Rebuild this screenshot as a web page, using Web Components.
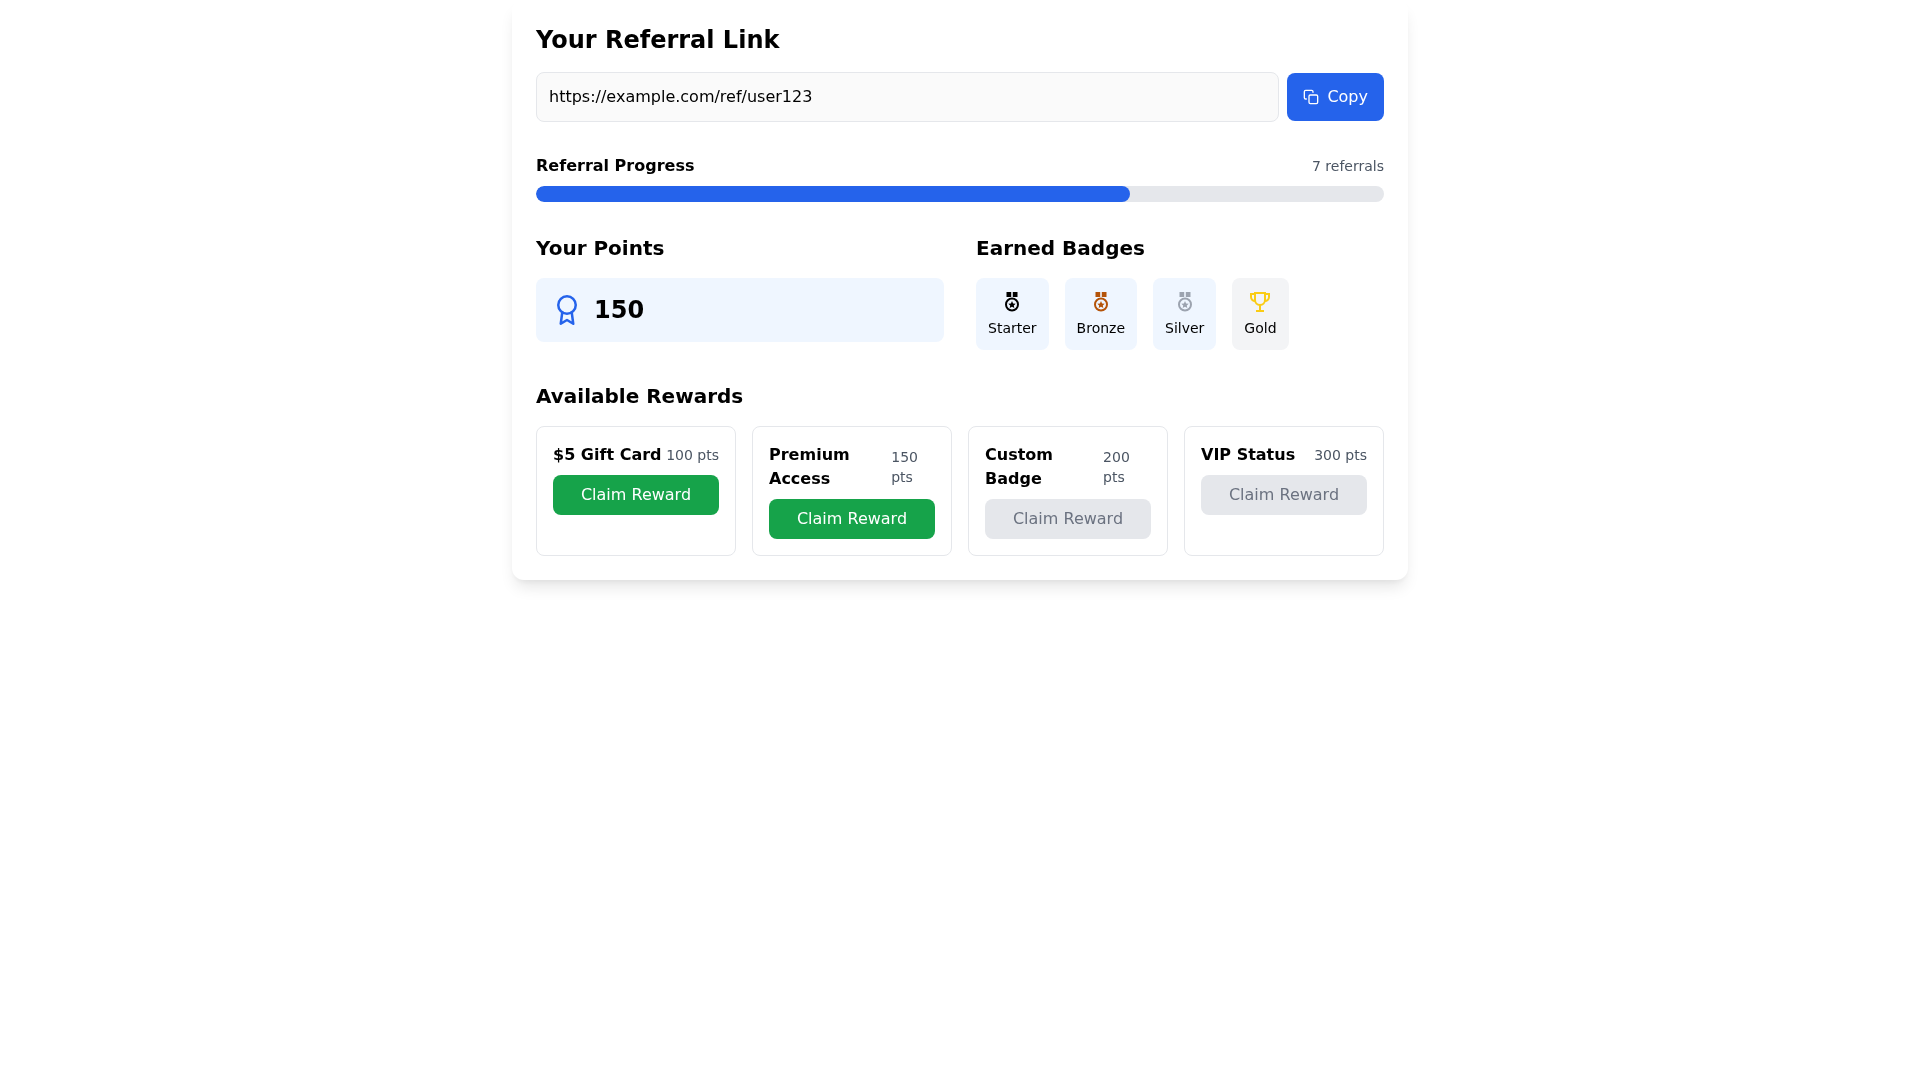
<!DOCTYPE html>
<html lang="en"><head><meta charset="utf-8"><title>Referral</title>
<style>
html,body{margin:0;padding:0;background:#fff}
body{min-height:100vh;font-family:"DejaVu Sans",sans-serif;color:#000}
</style></head><body>
<script>
const css=`*,:host{box-sizing:border-box}`;
function def(name,html){customElements.define(name,class extends HTMLElement{constructor(){super();this.attachShadow({mode:'open'}).innerHTML='<style>'+css+'</style>'+html;}});}

def('ref-h',`<style>:host{display:block;font-size:20px;line-height:28px;font-weight:700;margin-bottom:16px}</style><slot></slot>`);

def('copy-button',`<style>:host{display:block;flex:none}
.b{display:flex;align-items:center;height:48px;padding:0 16px;background:#2563eb;color:#fff;border-radius:8px;font-size:16px;line-height:24px}
svg{display:block;margin-right:8px;flex:none}</style>
<div class="b"><svg width="16" height="16" viewBox="0 0 24 24" fill="none" stroke="currentColor" stroke-width="2" stroke-linecap="round" stroke-linejoin="round"><rect x="9" y="9" width="13" height="13" rx="2" ry="2"/><path d="M5 15H4a2 2 0 0 1-2-2V4a2 2 0 0 1 2-2h9a2 2 0 0 1 2 2v1"/></svg><slot></slot></div>`);

def('link-row',`<style>:host{display:flex;align-items:center;gap:8px;margin-bottom:32px}
.i{flex:1;height:50px;border:1px solid #e5e7eb;background:#fafafa;border-radius:8px;padding:12px;font-size:16px;line-height:24px}</style>
<div class="i"><slot name="value"></slot></div><slot></slot>`);

def('progress-block',`<style>:host{display:block;margin-bottom:32px}
.r{display:flex;justify-content:space-between;align-items:center;height:24px;margin-bottom:8px}
.l{font-size:16px;line-height:24px;font-weight:700}.c{font-size:14px;line-height:20px;color:#4b5563}
.t{height:16px;background:#e5e7eb;border-radius:9999px;overflow:hidden}.f{height:100%;width:70%;background:#2563eb;border-radius:9999px}</style>
<div class="r"><div class="l"><slot name="label"></slot></div><div class="c"><slot name="count"></slot></div></div><div class="t"><div class="f"></div></div>`);

def('two-col',`<style>:host{display:grid;grid-template-columns:1fr 1fr;gap:32px;margin-bottom:32px}</style><slot></slot>`);

def('points-box',`<style>:host{display:flex;align-items:center;gap:12px;height:64px;padding:16px;background:#eff6ff;border-radius:8px;font-size:24px;line-height:32px;font-weight:700}
svg{display:block;flex:none}</style>
<svg width="30" height="30" viewBox="0 0 24 24" fill="none" stroke="#2563eb" stroke-width="2" stroke-linecap="round" stroke-linejoin="round"><circle cx="12" cy="8" r="7"/><polyline points="8.210 13.890 7 23 12 20 17 23 15.790 13.880"/></svg><slot></slot>`);

def('badge-row',`<style>:host{display:flex;gap:16px}</style><slot></slot>`);

def('ref-badge',`<style>:host{display:flex;flex-direction:column;align-items:center;height:72px;padding:12px;border-radius:8px;background:#eff6ff;font-size:14px;line-height:20px}
:host([muted]){background:#f3f4f6}
.ic{height:24px;margin-bottom:4px;display:block}</style><div class="ic"><slot name="icon"></slot></div><slot></slot>`);

def('medal-icon',`<style>:host{display:block;width:24px;height:24px}svg{display:block}</style>
<svg width="24" height="24" viewBox="0 0 24 24"><path fill="currentColor" d="M6.500 2h4.700v5H6.500zM12.800 2h4.700v5h-4.700z"/><circle cx="12" cy="14.500" r="6" fill="none" stroke="currentColor" stroke-width="2"/><path fill="currentColor" d="M12 11l1.100 2.400 2.600.3-1.900 1.800.5 2.600-2.300-1.300-2.300 1.300.5-2.600-1.900-1.800 2.600-.3z"/></svg>`);

def('trophy-icon',`<style>:host{display:block;width:24px;height:24px}svg{display:block}</style>
<svg width="24" height="24" viewBox="0 0 24 24" fill="none" stroke="currentColor" stroke-width="2"><path d="M7 3h10v7a5 5 0 0 1-10 0z"/><path d="M7 4H3v3a4 4 0 0 0 4.400 4"/><path d="M17 4h4v3a4 4 0 0 1-4.400 4"/><path d="M12 15v6"/><path d="M8 21h8"/></svg>`);

def('reward-grid',`<style>:host{display:grid;grid-template-columns:repeat(4,1fr);gap:16px}</style><slot></slot>`);

def('reward-card',`<style>:host{display:block;border:1px solid #e5e7eb;border-radius:8px;padding:16px}
.h{display:flex;justify-content:space-between;align-items:center;margin-bottom:8px}
.n{font-size:16px;line-height:24px;font-weight:700}.p{font-size:14px;line-height:20px;color:#4b5563}
.b{height:40px;border-radius:8px;background:#16a34a;color:#fff;font-size:16px;line-height:24px;display:flex;align-items:center;justify-content:center}
:host([disabled]) .b{background:#e5e7eb;color:#6b7280}</style>
<div class="h"><div class="n"><slot name="name"></slot></div><div class="p"><slot name="pts"></slot></div></div><div class="b"><slot></slot></div>`);

def('referral-card',`<style>:host{display:block;width:896px;margin:0 auto;padding:24px;background:#fff;border-radius:12px;will-change:transform;box-shadow:0 10px 15px -3px rgba(0,0,0,.1),0 4px 6px -2px rgba(0,0,0,.05)}
h2{margin:0 0 16px;font-size:24px;line-height:32px;font-weight:700}</style><h2><slot name="title"></slot></h2><slot></slot>`);
</script>
<referral-card>
<span slot="title">Your Referral Link</span>
<link-row><span slot="value">https://example.com/ref/user123</span><copy-button>Copy</copy-button></link-row>
<progress-block><span slot="label">Referral Progress</span><span slot="count">7 referrals</span></progress-block>
<two-col>
<div><ref-h>Your Points</ref-h><points-box>150</points-box></div>
<div><ref-h>Earned Badges</ref-h><badge-row>
<ref-badge><medal-icon slot="icon" style="color:#000"></medal-icon>Starter</ref-badge>
<ref-badge><medal-icon slot="icon" style="color:#b45309"></medal-icon>Bronze</ref-badge>
<ref-badge><medal-icon slot="icon" style="color:#9ca3af"></medal-icon>Silver</ref-badge>
<ref-badge muted><trophy-icon slot="icon" style="color:#facc15"></trophy-icon>Gold</ref-badge>
</badge-row></div>
</two-col>
<ref-h>Available Rewards</ref-h>
<reward-grid>
<reward-card><span slot="name">$5 Gift Card</span><span slot="pts">100 pts</span>Claim Reward</reward-card>
<reward-card><span slot="name">Premium Access</span><span slot="pts">150 pts</span>Claim Reward</reward-card>
<reward-card disabled><span slot="name">Custom Badge</span><span slot="pts">200 pts</span>Claim Reward</reward-card>
<reward-card disabled><span slot="name">VIP Status</span><span slot="pts">300 pts</span>Claim Reward</reward-card>
</reward-grid>
</referral-card>
</body></html>
